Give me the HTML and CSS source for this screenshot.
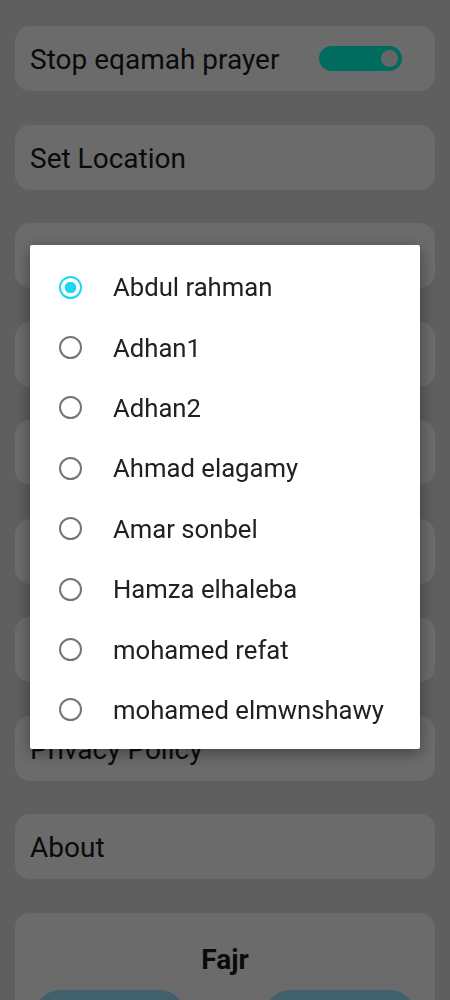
FILE: index.html
```html
<!DOCTYPE html>
<html lang="en">
<head>
    <meta charset="UTF-8">
    <meta name="viewport" content="width=device-width, initial-scale=1.0">
    <title>Settings</title>
    <link rel="stylesheet" href="styles.css">
</head>
<body>

<div class="settings">
    <div class="card">
        <span class="card-title">Stop eqamah prayer</span>
        <span class="switch"><span class="thumb"></span></span>
    </div>
    <div class="card"><span class="card-title">Set Location</span></div>
    <div class="card"><span class="card-title">Choose Adhan sound</span></div>
    <div class="card"></div>
    <div class="card"></div>
    <div class="card"></div>
    <div class="card"></div>
    <div class="card"><span class="card-title">Privacy Policy</span></div>
    <div class="card"><span class="card-title">About</span></div>

    <div class="card prayer-card">
        <h3>Fajr</h3>
        <div class="prayer-buttons">
            <span class="prayer-btn"></span>
            <span class="prayer-btn"></span>
        </div>
    </div>
</div>

<!-- dim layer + sound picker dialog -->
<div class="overlay">
    <div class="dialog">
        <label class="option"><input type="radio" name="sound" checked><span>Abdul rahman</span></label>
        <label class="option"><input type="radio" name="sound"><span>Adhan1</span></label>
        <label class="option"><input type="radio" name="sound"><span>Adhan2</span></label>
        <label class="option"><input type="radio" name="sound"><span>Ahmad elagamy</span></label>
        <label class="option"><input type="radio" name="sound"><span>Amar sonbel</span></label>
        <label class="option"><input type="radio" name="sound"><span>Hamza elhaleba</span></label>
        <label class="option"><input type="radio" name="sound"><span>mohamed refat</span></label>
        <label class="option"><input type="radio" name="sound"><span>mohamed elmwnshawy</span></label>
    </div>
</div>

</body>
</html>
```

FILE: styles.css
```css
body {
    margin: 0;
    font-family: Roboto, "Liberation Sans", sans-serif;
    background-color: #e2e2e2;
    overflow: hidden;
}

.settings {
    padding: 26px 15px 0;
    display: flex;
    flex-direction: column;
    gap: 33.5px;
}

.card {
    background-color: #fefefe;
    border-radius: 15px;
    height: 65px;
    padding: 2px 15px 0;
    display: flex;
    align-items: center;
    justify-content: space-between;
    box-sizing: border-box;
    flex-shrink: 0;
}

.card-title {
    font-size: 28px;
    color: #1a1a1a;
}

.switch {
    position: relative;
    width: 83px;
    height: 25px;
    border-radius: 13px;
    background-color: #00ffe2;
    margin-right: 18px;
    margin-bottom: 2px;
}

.switch .thumb {
    position: absolute;
    right: 4px;
    top: 4px;
    width: 17px;
    height: 17px;
    border-radius: 50%;
    background-color: #f4f4f4;
}

.prayer-card {
    height: 120px;
    flex-direction: column;
    justify-content: flex-start;
    padding: 30px 20px 0;
}

.prayer-card h3 {
    margin: 0 0 14px;
    font-size: 28px;
    color: #1a1a1a;
}

.prayer-buttons {
    display: flex;
    justify-content: space-between;
    width: 100%;
}

.prayer-btn {
    width: 150px;
    height: 50px;
    border-radius: 25px 25px 0 0;
    background-color: #98e4ff;
}

.overlay {
    position: fixed;
    inset: 0;
    background-color: rgba(0, 0, 0, 0.58);
}

.dialog {
    position: absolute;
    left: 30px;
    top: 245px;
    width: 390px;
    box-sizing: border-box;
    background-color: #fff;
    border-radius: 2px;
    padding: 12px 0 9px;
    box-shadow: 0 4px 16px rgba(0, 0, 0, 0.4);
}

.option {
    display: flex;
    align-items: center;
    height: 60.4px;
    padding-left: 29px;
    font-size: 25.7px;
    color: #212121;
}

.option input {
    appearance: none;
    margin: 0 31px 0 0;
    width: 23px;
    height: 23px;
    border: 2.5px solid #757575;
    border-radius: 50%;
    box-sizing: border-box;
    flex-shrink: 0;
}

.option input:checked {
    border-color: #1ad8f2;
    background: radial-gradient(circle, #1ad8f2 0 5.5px, transparent 6px);
}
```
